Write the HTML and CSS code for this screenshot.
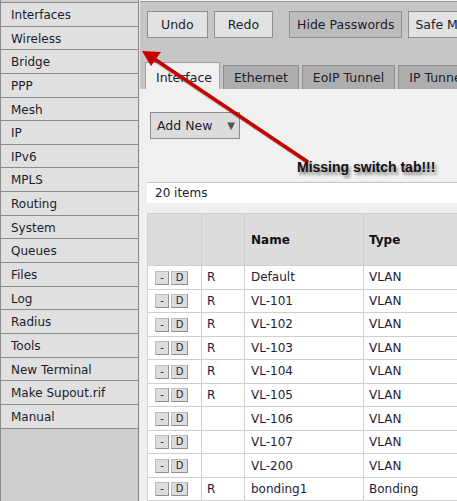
FILE: index.html
```html
<!DOCTYPE html>
<html>
<head>
<meta charset="utf-8">
<link rel="stylesheet" href="styles.css">
</head>
<body>
<div class="page">
  <nav class="side">
    <ul class="menu">
      <li>Interfaces</li>
      <li>Wireless</li>
      <li>Bridge</li>
      <li>PPP</li>
      <li>Mesh</li>
      <li>IP</li>
      <li>IPv6</li>
      <li>MPLS</li>
      <li>Routing</li>
      <li>System</li>
      <li>Queues</li>
      <li>Files</li>
      <li>Log</li>
      <li>Radius</li>
      <li>Tools</li>
      <li>New Terminal</li>
      <li>Make Supout.rif</li>
      <li>Manual</li>
    </ul>
  </nav>
  <main class="main">
    <div class="top">
      <div class="buttons">
        <span class="btn">Undo</span>
        <span class="btn">Redo</span>
        <span class="btn pressed sep">Hide Passwords</span>
        <span class="btn">Safe Mode</span>
      </div>
      <div class="tabs">
        <span class="tab active">Interface</span>
        <span class="tab">Ethernet</span>
        <span class="tab">EoIP Tunnel</span>
        <span class="tab">IP Tunnel</span>
        <span class="tab">GRE Tunnel</span>
      </div>
    </div>
    <div class="content">
      <div class="addrow"><span class="addnew">Add New <span class="caret">&#9660;</span></span></div>
      <div class="count">20 items</div>
      <table class="grid">
        <colgroup>
          <col class="c1"><col class="c2"><col class="c3"><col class="c4">
        </colgroup>
        <thead>
          <tr><th></th><th></th><th>Name</th><th>Type</th></tr>
        </thead>
        <tbody>
          <tr><td><span class="sb">-</span><span class="sb">D</span></td><td>R</td><td>Default</td><td>VLAN</td></tr>
          <tr><td><span class="sb">-</span><span class="sb">D</span></td><td>R</td><td>VL-101</td><td>VLAN</td></tr>
          <tr><td><span class="sb">-</span><span class="sb">D</span></td><td>R</td><td>VL-102</td><td>VLAN</td></tr>
          <tr><td><span class="sb">-</span><span class="sb">D</span></td><td>R</td><td>VL-103</td><td>VLAN</td></tr>
          <tr><td><span class="sb">-</span><span class="sb">D</span></td><td>R</td><td>VL-104</td><td>VLAN</td></tr>
          <tr><td><span class="sb">-</span><span class="sb">D</span></td><td>R</td><td>VL-105</td><td>VLAN</td></tr>
          <tr><td><span class="sb">-</span><span class="sb">D</span></td><td></td><td>VL-106</td><td>VLAN</td></tr>
          <tr><td><span class="sb">-</span><span class="sb">D</span></td><td></td><td>VL-107</td><td>VLAN</td></tr>
          <tr><td><span class="sb">-</span><span class="sb">D</span></td><td></td><td>VL-200</td><td>VLAN</td></tr>
          <tr><td><span class="sb">-</span><span class="sb">D</span></td><td>R</td><td>bonding1</td><td>Bonding</td></tr>
        </tbody>
      </table>
    </div>
  </main>
  <svg class="arrow" width="457" height="501" viewBox="0 0 457 501">
    <line x1="309" y1="163" x2="152" y2="58" stroke="rgba(0,0,0,0.25)" stroke-width="3.5" transform="translate(2,2)"/>
    <line x1="308" y1="162" x2="153" y2="58" stroke="#c40000" stroke-width="3.5"/>
    <polygon points="142,51 161,52 151,66" fill="#c40000"/>
  </svg>
  <div class="note">Missing switch tab!!!</div>
</div>
</body>
</html>
```
FILE: styles.css
```css
html, body {
  margin: 0;
  padding: 0;
}
body {
  width: 457px;
  height: 501px;
  overflow: hidden;
  font-family: "DejaVu Sans", Verdana, sans-serif;
  font-size: 12px;
  color: #1c1c2c;
  background: #f0f0f0;
}
.page {
  position: relative;
  display: flex;
  height: 501px;
  overflow: hidden;
}
.side {
  width: 137px;
  flex: none;
  background: #cecece;
  border-left: 1px solid #8c8c8c;
  border-right: 1px solid #8c8c8c;
  padding-top: 2px;
}
.menu {
  list-style: none;
  margin: 0;
  padding: 0;
  border-top: 1px solid #8c8c8c;
}
.menu li {
  height: 22.65px;
  line-height: 24px;
  padding-left: 10px;
  background: #e0e0e0;
  border-bottom: 1px solid #8c8c8c;
  white-space: nowrap;
}
.main {
  flex: 1;
  min-width: 0;
  overflow: hidden;
  display: flex;
  flex-direction: column;
  border-left: 1px solid #e6e6e6;
}
.top {
  background: #c6c6c6;
  border-top: 1px solid #9a9a9a;
  margin-top: 1px;
  padding: 9px 0 0 7px;
}
.buttons {
  display: flex;
  gap: 6px;
  white-space: nowrap;
}
.btn {
  flex: none;
  height: 25px;
  line-height: 25px;
  padding: 0 13px;
  background: #e2e2e2;
  border: 1px solid #8e8e8e;
  font-size: 12.5px;
}
.btn.pressed {
  background: #bcbcbc;
  padding: 0 7px;
}
.btn.sep {
  margin-left: 10px;
}
.btn:last-child {
  padding: 0 6px;
}
.tabs {
  display: flex;
  align-items: flex-end;
  gap: 3px;
  margin-top: 24px;
  margin-left: -2px;
  white-space: nowrap;
}
.tab {
  flex: none;
  height: 23px;
  line-height: 24px;
  padding: 0 10px;
  background: #adadad;
  border: 1px solid #8e8e8e;
  border-bottom: none;
  font-size: 12.5px;
}
.tab.active {
  height: 26px;
  line-height: 29px;
  padding: 0 7px 0 10px;
  background: #f0f0f0;
  border-color: #a0a0a0;
}
.content {
  flex: 1;
  background: #f0f0f0;
  padding: 23px 0 0 7px;
}
.addrow {
  display: flex;
  padding-left: 3px;
}
.addnew {
  height: 25px;
  line-height: 25px;
  width: 82px;
  padding-left: 6px;
  background: #dcdcdc;
  border: 1px solid #8a8a8a;
  font-size: 12.5px;
  position: relative;
}
.caret {
  position: absolute;
  right: 4px;
  top: 0;
  font-size: 10px;
  color: #555;
}
.count {
  margin-top: 43px;
  height: 20px;
  line-height: 21px;
  background: #fff;
  border-top: 1px solid #c4c4c4;
  padding-left: 8px;
  width: 400px;
}
.grid {
  margin-top: 10px;
  border-collapse: collapse;
  table-layout: fixed;
  width: 480px;
  background: #fff;
  border-left: 1px solid #cfcfcf;
}
.c1 { width: 54px; }
.c2 { width: 43px; }
.c3 { width: 119px; }
.grid th {
  height: 51px;
  background: #dcdcdc;
  text-align: left;
  font-weight: bold;
  padding: 0 0 0 5px;
  border-right: 1px solid #cfcfcf;
  border-top: 1px solid #d0d0d0;
  border-bottom: 1px solid #cfcfcf;
  color: #111;
}
.grid th:nth-child(3) {
  padding-left: 6px;
}
.grid td {
  height: 22.55px;
  padding: 0 0 0 5px;
  border-right: 1px solid #cfcfcf;
  border-bottom: 1px solid #cfcfcf;
  white-space: nowrap;
  color: #1c1c3c;
}
.grid td:nth-child(3) {
  padding-left: 6px;
}
.grid td:first-child {
  padding-left: 7px;
}
.sb {
  display: inline-block;
  height: 12px;
  line-height: 12px;
  background: #dcdcdc;
  border: 1px solid #8e8e8e;
  border-color: #bdbdbd #8e8e8e #8e8e8e #bdbdbd;
  font-size: 10px;
  text-align: center;
  vertical-align: middle;
  margin-right: 2px;
}
.sb:first-child { width: 12px; }
.sb:last-child { width: 15px; }
.arrow {
  position: absolute;
  left: 0;
  top: 0;
  pointer-events: none;
}
.note {
  position: absolute;
  left: 297px;
  top: 159px;
  font-family: "Liberation Sans", Arial, sans-serif;
  font-weight: bold;
  font-size: 14px;
  color: #111;
  text-shadow: 2px 3px 3px rgba(0, 0, 0, 0.45);
  white-space: nowrap;
}
```
